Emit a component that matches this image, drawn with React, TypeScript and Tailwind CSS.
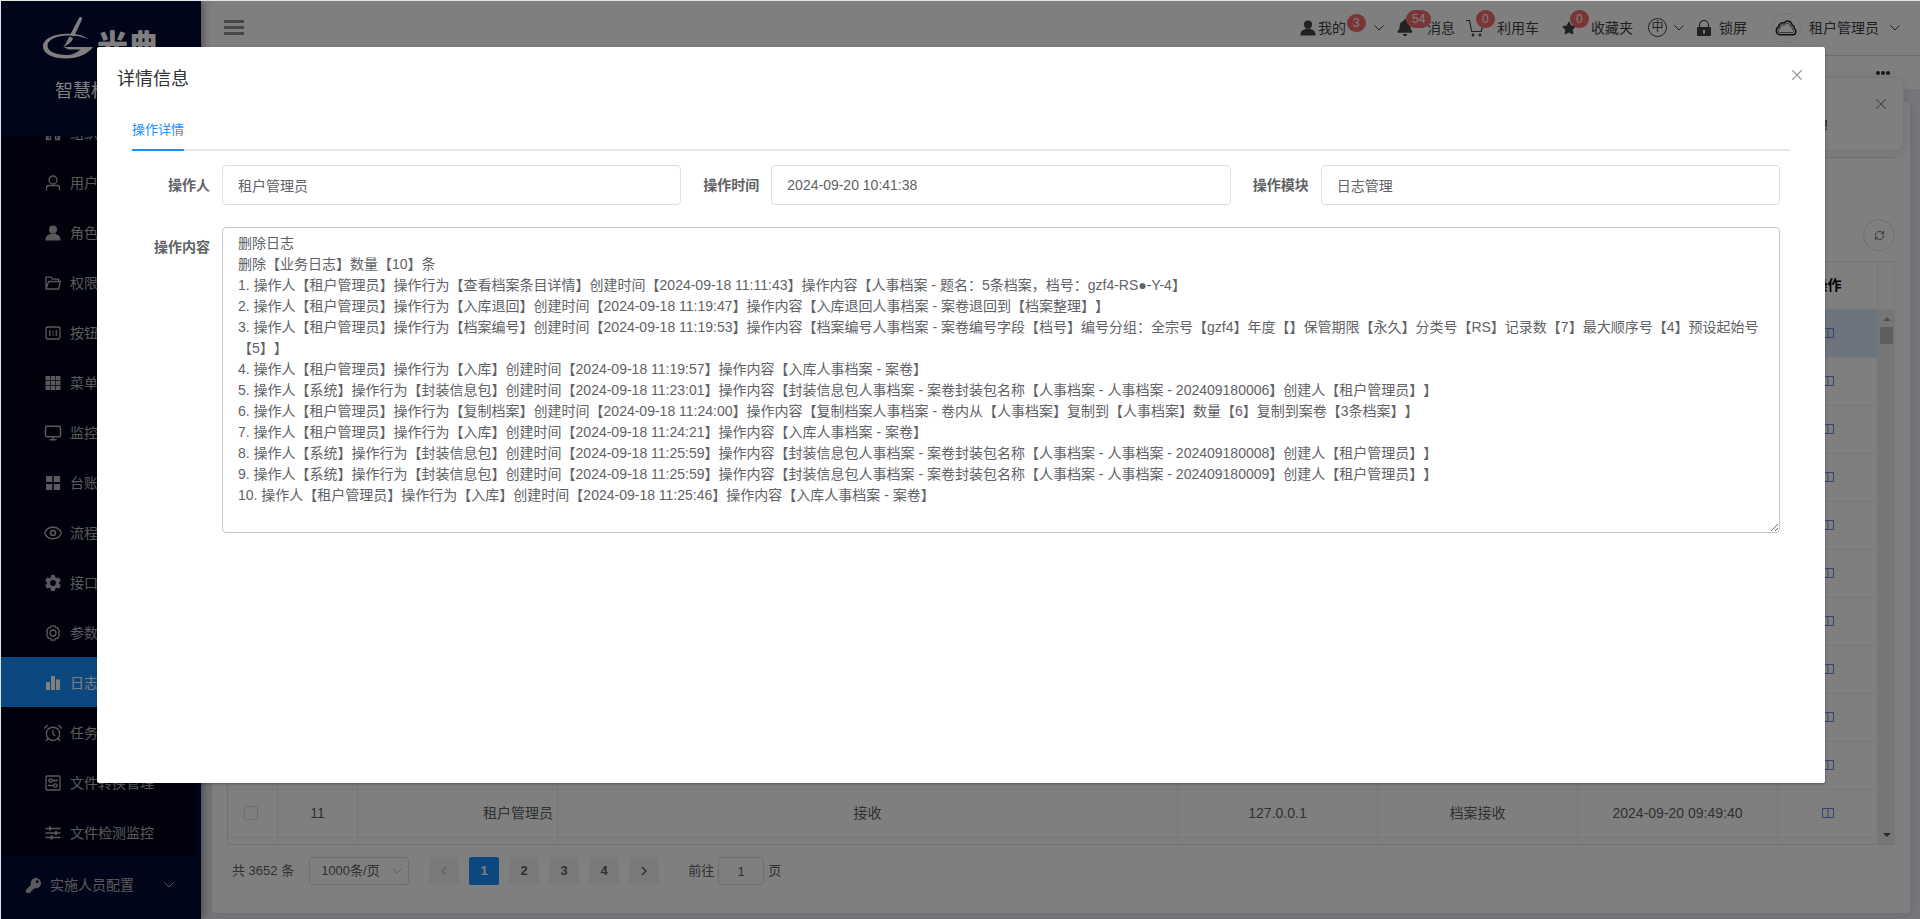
import React from "react";
import { AlarmClock, Eye, Monitor, RefreshCw } from "lucide-react";
import { FaBell, FaKey, FaStar } from "react-icons/fa";
import { MdSettings } from "react-icons/md";

interface MenuItem {
  label: string;
  icon: React.ReactNode;
  active?: boolean;
}

interface LogRow {
  id: number;
  user: string;
  action: string;
  ip: string;
  module: string;
  time: string;
}

const svgLine = {
  viewBox: "0 0 16 16",
  fill: "none",
  stroke: "currentColor",
  strokeWidth: 1.3,
  className: "w-4 h-4",
};

const svgSolid = {
  viewBox: "0 0 16 16",
  fill: "currentColor",
  className: "w-4 h-4",
};

const OrgIcon = () => (
  <svg {...svgLine}>
    <path d="M8 2v6M3 14V8h10v6M1.5 10.5v4h4v-4zM10.5 10.5v4h4v-4z" />
  </svg>
);

const UserLineIcon = () => (
  <svg {...svgLine}>
    <circle cx="8" cy="5" r="4" />
    <path d="M1.5 15.5v-2.5a2.5 2.5 0 0 1 2.5-2.5h8a2.5 2.5 0 0 1 2.5 2.5v2.5" />
  </svg>
);

const UserSolidIcon = () => (
  <svg {...svgSolid}>
    <circle cx="8" cy="4.5" r="4" />
    <path d="M5.5 8.5h5l.8 1c2.4.6 4 2 4.2 4.5v1.5H.5V14c.2-2.5 1.8-3.900 4.200-4.500z" />
  </svg>
);

const FolderIcon = () => (
  <svg {...svgLine}>
    <path d="M1 14V2.200h5l1.700 2h6V6.500M1 14l2.600-7.500H15.300L13.700 14z" />
  </svg>
);

const ButtonIcon = () => (
  <svg {...svgLine}>
    <rect x="1" y="2" width="14" height="12" rx="1.500" />
    <path d="M4.700 5v6M11.300 5v6M8 6v1.500M8 9v1.500" />
  </svg>
);

const GridIcon = () => (
  <svg {...svgSolid}>
    <path d="M.5 1h4.500v4H.5zM5.700 1h4.600v4H5.700zM11 1h4.500v4H11zM.5 5.800h4.500v4.400H.5zM5.700 5.800h4.600v4.400H5.700zM11 5.800h4.500v4.400H11zM.5 11h4.500v4H.5zM5.700 11h4.600v4H5.700zM11 11h4.500v4H11z" />
  </svg>
);

const BlocksIcon = () => (
  <svg {...svgSolid}>
    <rect x="1" y="1" width="6.300" height="6" rx="0.600" />
    <rect x="8.800" y="1" width="6.300" height="6" rx="0.600" />
    <rect x="1" y="9" width="6.300" height="6" rx="0.600" />
    <rect x="8.800" y="9" width="6.300" height="6" rx="0.600" />
  </svg>
);

// round gear with six soft teeth
const GearLineIcon = () => (
  <svg {...svgLine}>
    <path d="M6.200.8h3.600l.8 1.700 1.900.2 1.800 3.100L13.500 8l.8 2.200-1.800 3.100-1.900.2-.8 1.700H6.200l-.8-1.700-1.900-.2-1.800-3.100L2.500 8l-.8-2.200 1.800-3.100 1.900-.2z" strokeLinejoin="round" />
    <circle cx="8" cy="8" r="3" />
  </svg>
);

const ChartIcon = () => (
  <svg {...svgSolid}>
    <rect x="1" y="7" width="4" height="8" />
    <rect x="6" y="1" width="4" height="14" />
    <rect x="11" y="4.500" width="4" height="10.500" />
  </svg>
);

const SetUpIcon = () => (
  <svg {...svgLine}>
    <rect x="1" y="1" width="14" height="14" rx="1" />
    <circle cx="5.500" cy="5.500" r="1.700" />
    <circle cx="10.500" cy="10.500" r="1.700" />
    <path d="M7.200 5.500H13M3 10.500h5.800" />
  </svg>
);

const OperationIcon = () => (
  <svg {...svgLine}>
    <path d="M.5 3.500h15M.5 8h15M.5 12.500h15" />
    <path d="M5 1.500v4M11 6v4M6.500 10.500v4" strokeWidth="2" />
  </svg>
);

const LockIcon = () => (
  <svg viewBox="0 0 14 16" className="w-[14px] h-4">
    <path d="M2.500 8V5a4.500 4.500 0 0 1 9 0v3" fill="none" stroke="currentColor" strokeWidth="1.200" />
    <path d="M1 7h12a1 1 0 0 1 1 1v7a1 1 0 0 1-1 1H1a1 1 0 0 1-1-1V8a1 1 0 0 1 1-1zm5 3v3.500h2V10z" fill="currentColor" fillRule="evenodd" />
  </svg>
);

const CartIcon = () => (
  <svg viewBox="0 0 18 18" fill="none" stroke="currentColor" strokeWidth="1.200" className="w-[18px] h-[18px]">
    <path d="M0 1.500h3.500l2.200 11h9.600l1.700-8.500" />
    <circle cx="7" cy="16" r="0.800" fill="currentColor" />
    <circle cx="14" cy="16" r="0.800" fill="currentColor" />
  </svg>
);

const CloudIcon = () => (
  <svg viewBox="0 0 22 16" fill="none" stroke="#222" strokeLinejoin="round" className="w-[22px] h-4">
    <path d="M5 14.800a4.200 4.200 0 0 1-1.200-8C3.700 3.500 7 2 9 3.200c2-3.500 7.500-2.500 8 1.800 1.800.5 2.600 2 2.200 3.600 3 2 1.800 6.200-1.700 6.200z" strokeWidth="1.500" />
    <path d="M5.500 12.600c-3 0-3.300-3.600-.4-4.300-.6-3.200 2.400-4.200 4.200-2.900 1.400-3 5.700-2.400 6 1 2 .3 2.200 1.700 1.800 2.900 2.400.9 1.900 3.300 0 3.300z" strokeWidth="0.700" />
  </svg>
);

const ChevronDown = () => (
  <svg viewBox="0 0 10 6" fill="none" stroke="currentColor" className="w-[10px] h-[6px]">
    <path d="M.5.5 5 5 9.500.5" />
  </svg>
);

const CloseIcon = () => (
  <svg viewBox="0 0 10 10" fill="none" stroke="currentColor" strokeWidth="1.200" className="w-[10px] h-[10px]">
    <path d="M.3.3l9.400 9.400M9.700.3.3 9.700" />
  </svg>
);

const BookIcon = () => (
  <svg viewBox="0 0 12 10" fill="none" stroke="currentColor" className="w-3 h-[10px]">
    <path d="M.5.5h11v9H.5zM6 .5v9" />
  </svg>
);

const LogoMark = () => (
  <svg viewBox="0 0 50 42" fill="currentColor" className="w-[50px] h-[42px]">
    {/* open ring */}
    <path d="M45 22C41 18.500 34 16.700 25 16.700 11 16.700 0 21.500 0 29.500 0 37 10 41.500 23 41.500c12 0 21-4 27-11.500H20.500l5 2.500h12C34 36 29 38 23.500 38 13 38 4.500 34.500 4.500 28.500 4.500 22.500 14 18.500 25 18.500c8 0 14 1 20 3.500z" />
    {/* brush */}
    <path d="M36.500.2c1.500-.5 3 .5 2.600 2L31 19.500l-4-1.500z" />
    <path d="M26.500 19.500l3.500 1.500c-1 4-5 7-10 9 3.500-3.500 4-7 6.500-10.500z" />
  </svg>
);

const menuItems: MenuItem[] = [
  { label: "组织机构", icon: <OrgIcon /> },
  { label: "用户管理", icon: <UserLineIcon /> },
  { label: "角色管理", icon: <UserSolidIcon /> },
  { label: "权限管理", icon: <FolderIcon /> },
  { label: "按钮管理", icon: <ButtonIcon /> },
  { label: "菜单管理", icon: <GridIcon /> },
  { label: "监控管理", icon: <Monitor size={18} className="-mx-px" /> },
  { label: "台账管理", icon: <BlocksIcon /> },
  { label: "流程管理", icon: <Eye size={20} strokeWidth={1.7} className="-mx-[2px]" /> },
  { label: "接口管理", icon: <MdSettings size={20} className="-mx-[2px]" /> },
  { label: "参数管理", icon: <GearLineIcon /> },
  { label: "日志管理", icon: <ChartIcon />, active: true },
  { label: "任务管理", icon: <AlarmClock size={20} strokeWidth={1.7} className="-mx-[2px]" /> },
  { label: "文件转换管理", icon: <SetUpIcon /> },
  { label: "文件检测监控", icon: <OperationIcon /> },
];

const rows: LogRow[] = Array.from({ length: 12 }, (_, i) => ({
  id: i + 1,
  user: "租户管理员",
  action: "接收",
  ip: "127.0.0.1",
  module: "档案接收",
  time: "2024-09-20 09:49:40",
}));

const fields = [
  { id: "operator", label: "操作人", value: "租户管理员" },
  { id: "time", label: "操作时间", value: "2024-09-20 10:41:38" },
  { id: "module", label: "操作模块", value: "日志管理" },
];

const content = `删除日志
删除【业务日志】数量【10】条
1. 操作人【租户管理员】操作行为【查看档案条目详情】创建时间【2024-09-18 11:11:43】操作内容【人事档案 - 题名：5条档案，档号：gzf4-RS●-Y-4】
2. 操作人【租户管理员】操作行为【入库退回】创建时间【2024-09-18 11:19:47】操作内容【入库退回人事档案 - 案卷退回到【档案整理】】
3. 操作人【租户管理员】操作行为【档案编号】创建时间【2024-09-18 11:19:53】操作内容【档案编号人事档案 - 案卷编号字段【档号】编号分组：全宗号【gzf4】年度【】保管期限【永久】分类号【RS】记录数【7】最大顺序号【4】预设起始号【5】】
4. 操作人【租户管理员】操作行为【入库】创建时间【2024-09-18 11:19:57】操作内容【入库人事档案 - 案卷】
5. 操作人【系统】操作行为【封装信息包】创建时间【2024-09-18 11:23:01】操作内容【封装信息包人事档案 - 案卷封装包名称【人事档案 - 人事档案 - 202409180006】创建人【租户管理员】】
6. 操作人【租户管理员】操作行为【复制档案】创建时间【2024-09-18 11:24:00】操作内容【复制档案人事档案 - 卷内从【人事档案】复制到【人事档案】数量【6】复制到案卷【3条档案】】
7. 操作人【租户管理员】操作行为【入库】创建时间【2024-09-18 11:24:21】操作内容【入库人事档案 - 案卷】
8. 操作人【系统】操作行为【封装信息包】创建时间【2024-09-18 11:25:59】操作内容【封装信息包人事档案 - 案卷封装包名称【人事档案 - 人事档案 - 202409180008】创建人【租户管理员】】
9. 操作人【系统】操作行为【封装信息包】创建时间【2024-09-18 11:25:59】操作内容【封装信息包人事档案 - 案卷封装包名称【人事档案 - 人事档案 - 202409180009】创建人【租户管理员】】
10. 操作人【租户管理员】操作行为【入库】创建时间【2024-09-18 11:25:46】操作内容【入库人事档案 - 案卷】`;

function Badge({ children }: { children: React.ReactNode }) {
  return (
    <span className="h-[18px] px-[6px] rounded-full bg-[#f56c6c] text-white text-xs leading-[18px] text-center">
      {children}
    </span>
  );
}

function Sidebar() {
  return (
    <aside className="relative z-10 w-[200px] shrink-0 flex flex-col bg-[#000a32] text-[#b4b4b8] shadow-[2px_0_8px_rgba(0,0,0,0.4)]">
      <div className="h-[135px] shrink-0 flex flex-col items-center pt-4 text-white">
        <div className="flex items-end gap-1">
          <LogoMark />
          <span className="h-7 text-[31px] leading-8 font-black">光典</span>
        </div>
        <h1 className="mt-4 pr-[2px] text-lg leading-8">智慧档案馆</h1>
      </div>
      {/* scrolled to the end, so the first entry is cut off */}
      <nav className="flex-1 min-h-0 overflow-hidden flex flex-col justify-end pb-[6px]">
        <ul className="w-[195px] shrink-0 bg-[#00031a]">
          {menuItems.map((item) => (
            <li key={item.label}>
              <a
                href="#"
                className={`flex items-center gap-[9px] h-[50px] pt-[2px] pl-11 text-sm ${item.active ? "bg-[#1890ff] text-white" : ""}`}
              >
                {item.icon}
                <span>{item.label}</span>
              </a>
            </li>
          ))}
        </ul>
        <button className="w-[195px] h-14 shrink-0 flex items-center pl-[25px] pr-[22px] text-sm">
          <FaKey className="w-[15px] h-[15px] mr-[9px]" />
          <span className="flex-1 text-left">实施人员配置</span>
          <ChevronDown />
        </button>
      </nav>
    </aside>
  );
}

function TopBar() {
  return (
    <header className="h-[55px] shrink-0 flex items-center pl-[23px] pr-5 pb-px bg-white border-b border-[#d8dce5] text-sm text-[#404246]">
      <button aria-label="折叠菜单" className="flex flex-col gap-[3px]">
        <span className="block w-5 h-[3px] bg-[#909090]" />
        <span className="block w-5 h-[3px] bg-[#909090]" />
        <span className="block w-5 h-[3px] bg-[#909090]" />
      </button>
      <div className="ml-auto flex items-center">
        <button className="relative flex items-center gap-[2px] text-[#404246]">
          <UserSolidIcon />
          我的
          <span className="absolute left-[47px] -top-1 flex"><Badge>3</Badge></span>
          <span className="ml-[26px]"><ChevronDown /></span>
        </button>
        <button className="relative ml-[13px] flex items-center gap-[14px]">
          <FaBell className="w-4 h-[17px]" />
          消息
          <span className="absolute left-[9px] -top-2 flex"><Badge>54</Badge></span>
        </button>
        <button className="relative ml-[11px] flex items-center gap-[13px]">
          <CartIcon />
          利用车
          <span className="absolute left-[10px] -top-2 flex"><Badge>0</Badge></span>
        </button>
        <button className="relative ml-[23px] flex items-center gap-[15px]">
          <FaStar className="w-[14px] h-[14px]" />
          收藏夹
          <span className="absolute left-2 -top-2 flex"><Badge>0</Badge></span>
        </button>
        <button className="ml-[15px] flex items-center gap-[7px]">
          <span className="w-[19px] h-[19px] rounded-full border border-current text-xs leading-4 text-center">中</span>
          <ChevronDown />
        </button>
        <button className="ml-[13px] flex items-center gap-2">
          <LockIcon />
          锁屏
        </button>
        <button className="ml-6 flex items-center gap-2">
          <span className="w-[30px] h-[30px] rounded-full border border-[#ececec] flex items-center justify-center">
            <CloudIcon />
          </span>
          租户管理员
          <span className="ml-[3px]"><ChevronDown /></span>
        </button>
      </div>
    </header>
  );
}

function LogTable() {
  return (
    <div className="flex-1 min-h-0 flex overflow-hidden border border-r-0 border-[#e4e7f0]">
      <table className="flex-1 table-fixed border-separate border-spacing-0 text-sm text-[#606266]">
        <colgroup>
          <col className="w-[50px]" />
          <col className="w-[80px]" />
          <col className="w-[200px]" />
          <col />
          <col className="w-[200px]" />
          <col className="w-[200px]" />
          <col className="w-[200px]" />
          <col className="w-[100px]" />
        </colgroup>
        <thead>
          <tr className="text-black">
            {["", "序号", "操作人", "操作行为", "IP地址", "操作模块", "操作时间", "操作"].map((title) => (
              <th key={title} className="h-12 pb-[2px] border-r border-b border-[#ebeef5] font-bold">{title}</th>
            ))}
          </tr>
        </thead>
        <tbody>
          {rows.map((row) => (
            <tr
              key={row.id}
              className={`text-center *:h-12 *:pb-[2px] *:border-r *:border-b *:border-[#ebeef5] ${row.id === 1 ? "bg-[#d9e8fb]" : ""}`}
            >
              <td className="pr-[3px]">
                <input
                  type="checkbox"
                  aria-label={`选择第${row.id}行`}
                  className="block mx-auto appearance-none w-[14px] h-[14px] border border-[#dcdfe6] rounded-xs"
                />
              </td>
              <td>{row.id}</td>
              <td className="text-right pr-1">{row.user}</td>
              <td>{row.action}</td>
              <td>{row.ip}</td>
              <td>{row.module}</td>
              <td>{row.time}</td>
              <td>
                <button aria-label="查看" className="block mx-auto text-[#6485e6]"><BookIcon /></button>
              </td>
            </tr>
          ))}
        </tbody>
      </table>
      <div className="w-[17px] shrink-0 flex flex-col">
        <div className="h-12 shrink-0 border-r border-b border-[#ebeef5]" />
        <div className="flex-1 min-h-0 flex flex-col items-center bg-[#ededed] py-[7px]">
          <span className="border-x-4 border-b-4 border-x-transparent border-b-[#a0a0a0]" />
          <span className="mt-[6px] w-[13px] h-[17px] bg-[#bcbcbc]" />
          <span className="mt-auto border-x-4 border-t-4 border-x-transparent border-t-[#505050]" />
        </div>
      </div>
    </div>
  );
}

function Pagination() {
  return (
    <div className="shrink-0 flex items-center h-7 mt-3 pl-[5px] text-[13px] text-[#606266]">
      <span>共 3652 条</span>
      <label className="relative ml-[15px] flex items-center">
        <select aria-label="每页条数" className="appearance-none w-[100px] h-7 pl-[11px] border border-[#dcdfe6] rounded-[3px] leading-6">
          <option>1000条/页</option>
        </select>
        <span className="absolute right-[7px] text-[#c0c4cc]"><ChevronDown /></span>
      </label>
      <div className="ml-5 flex gap-[10px] font-bold">
        <button aria-label="上一页" className="w-[30px] h-7 rounded-xs bg-[#f4f4f5] flex items-center justify-center text-[#c0c4cc]">
          <svg viewBox="0 0 6 10" fill="none" stroke="currentColor" strokeWidth="1.500" className="w-[6px] h-[10px]"><path d="M5 1 1 5l4 4" /></svg>
        </button>
        <button className="w-[30px] h-7 rounded-xs bg-[#1890ff] text-white">1</button>
        <button className="w-[30px] h-7 rounded-xs bg-[#f4f4f5]">2</button>
        <button className="w-[30px] h-7 rounded-xs bg-[#f4f4f5]">3</button>
        <button className="w-[30px] h-7 rounded-xs bg-[#f4f4f5]">4</button>
        <button aria-label="下一页" className="w-[30px] h-7 rounded-xs bg-[#f4f4f5] flex items-center justify-center">
          <svg viewBox="0 0 6 10" fill="none" stroke="currentColor" strokeWidth="1.500" className="w-[6px] h-[10px]"><path d="m1 1 4 4-4 4" /></svg>
        </button>
      </div>
      <label className="ml-[29px] flex items-center gap-1">
        前往
        <input defaultValue="1" className="w-[46px] h-7 border border-[#dcdfe6] rounded text-center" />
        页
      </label>
    </div>
  );
}

function DetailDialog() {
  return (
    <div
      role="dialog"
      aria-label="详情信息"
      className="w-[90%] h-[calc(80vh+1px)] mt-[5vh] mx-auto px-5 bg-white rounded-xs shadow-[0_1px_3px_rgba(0,0,0,0.3)]"
    >
      <div className="flex justify-between pt-5 pr-[3px] pb-[10px]">
        <h2 className="text-lg leading-6 text-[#303133]">详情信息</h2>
        <button aria-label="关闭" className="h-4 text-[#909399]"><CloseIcon /></button>
      </div>
      <div className="px-[15px]">
        <div className="mt-2 h-[42px] border-b-2 border-[#e4e7ed] text-[13px]">
          <button className="h-[42px] pt-[2px] border-b-2 border-[#1890ff] text-[#1890ff]">操作详情</button>
        </div>
        <form className="pt-[14px] pr-[10px] text-sm text-[#606266]">
          <div className="grid grid-cols-3">
            {fields.map((f) => (
              <div key={f.id} className="flex mb-[22px]">
                <label htmlFor={f.id} className="w-[90px] shrink-0 pr-3 text-right font-bold leading-10">{f.label}</label>
                <input
                  id={f.id}
                  readOnly
                  defaultValue={f.value}
                  className="flex-1 min-w-0 h-10 px-[15px] border border-[#dcdfe6] rounded"
                />
              </div>
            ))}
          </div>
          <div className="flex">
            <label htmlFor="content" className="w-[90px] shrink-0 pr-3 text-right font-bold leading-10">操作内容</label>
            <textarea
              id="content"
              readOnly
              rows={14}
              defaultValue={content}
              className="flex-1 min-w-0 px-[15px] py-[5px] border border-[#c0c4cc] rounded leading-[21px] resize-y [text-spacing-trim:space-all]"
            />
          </div>
        </form>
      </div>
    </div>
  );
}

export default function App() {
  return (
    <div className="h-screen pt-px pl-px bg-[#dfe6e4] font-['Liberation_Sans','Noto_Sans_CJK_SC',sans-serif]">
      <div className="relative h-full flex overflow-hidden">
        <Sidebar />
        <div className="flex-1 min-w-0 flex flex-col bg-[#ebeef5]">
          <TopBar />
          <div className="h-[35px] shrink-0 flex justify-end items-center pr-[30px] bg-white border-b border-[#d8dce5]">
            <button aria-label="更多" className="flex gap-px">
              <span className="w-1 h-1 rounded-full bg-[#303133]" />
              <span className="w-1 h-1 rounded-full bg-[#303133]" />
              <span className="w-1 h-1 rounded-full bg-[#303133]" />
            </button>
          </div>
          <main className="flex-1 min-h-0 flex flex-col mt-[11px] mr-[10px] mb-[6px] ml-[11px] px-[15px] pb-7 bg-white rounded shadow-[0_2px_12px_rgba(0,0,0,0.1)]">
            <div className="h-14 shrink-0 border-b border-[#dcdfe6]" />
            <div className="h-[103px] shrink-0 flex justify-end items-end pb-[10px]">
              <button aria-label="刷新" className="w-8 h-8 rounded-full border border-[#dcdfe6] flex items-center justify-center text-[#606266]">
                <RefreshCw size={11} />
              </button>
            </div>
            <LogTable />
            <Pagination />
          </main>
        </div>

        {/* notification */}
        <div className="absolute right-4 top-[76px] z-20 w-[330px] h-[74px] bg-white border border-[#ebeef5] rounded-lg shadow-[0_2px_12px_rgba(0,0,0,0.1)]">
          <p className="pt-[37px] pr-[75px] text-right text-sm text-[#303133]">!</p>
          <button aria-label="关闭通知" className="absolute right-[17px] top-[21px] text-[#909399]"><CloseIcon /></button>
        </div>

        <div className="absolute inset-y-0 left-0 -right-px z-30 bg-black/50">
          <DetailDialog />
        </div>
      </div>
    </div>
  );
}
